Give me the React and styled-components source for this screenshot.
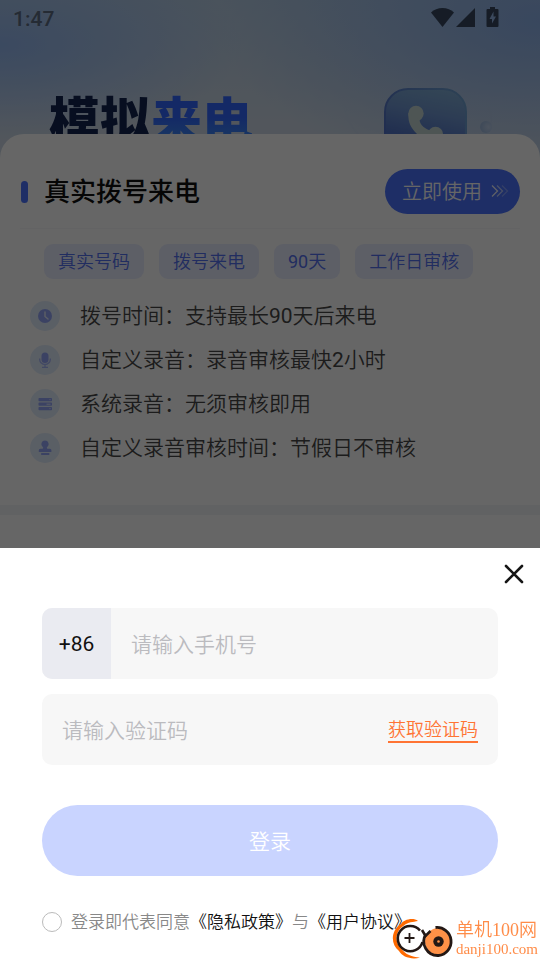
import React, { useState } from "react"
import styled, { createGlobalStyle } from "styled-components"

const tags = ["真实号码", "拨号来电", "90天", "工作日审核"]

const features = [
  { icon: "clock", text: "拨号时间：支持最长90天后来电" },
  { icon: "mic", text: "自定义录音：录音审核最快2小时" },
  { icon: "server", text: "系统录音：无须审核即用" },
  { icon: "stamp", text: "自定义录音审核时间：节假日不审核" },
]

// digits get the regular weight, the Chinese text around them stays lighter
const withDigits = (text) =>
  text.split(/(\d+)/).map((part, i) => (i % 2 ? <Digits key={i}>{part}</Digits> : part))

const featureIcons = {
  clock: (
    <>
      <circle cx="15" cy="15" r="7" fill="#94a6f8" />
      <path d="M15 11v4.5l3 2.5" stroke="#e4ecfc" strokeWidth="1.4" fill="none" strokeLinecap="round" />
    </>
  ),
  mic: (
    <>
      <rect x="11.500" y="7.500" width="7" height="10.500" rx="3.500" fill="#94a6f8" />
      <path d="M9.700 13.500v1a5.300 5 0 0 0 10.600 0v-1M15 20v2M12 22.400h6" stroke="#a6b6fa" strokeWidth="1.3" fill="none" />
    </>
  ),
  server: (
    <>
      <rect x="8.500" y="9" width="13.500" height="3.200" rx="0.800" fill="#94a6f8" />
      <rect x="8.500" y="13.600" width="13.500" height="3.200" rx="0.800" fill="#94a6f8" />
      <rect x="8.500" y="18" width="13.500" height="3.200" rx="0.800" fill="#94a6f8" />
      <path d="M19.500 10.600h1M16.500 15.200h4M19.500 19.600h1" stroke="#dfe7ff" strokeWidth="1" />
    </>
  ),
  stamp: (
    <>
      <path
        d="M15 7.500a3.700 3.700 0 0 1 2.300 6.600c-.8.600-.6 1.600.4 1.700h2.300a1.500 1.500 0 0 1 1.400 1.500v1.700H8.800v-1.700a1.500 1.500 0 0 1 1.400-1.500h2.100c1-.1 1.200-1.100.4-1.700A3.700 3.700 0 0 1 15 7.500z"
        fill="#94a6f8"
      />
      <rect x="11" y="20" width="8.500" height="2" rx="0.800" fill="#94a6f8" />
    </>
  ),
}

const StatusIcons = () => (
  <svg width="68" height="26" viewBox="0 0 68 26" fill="#374860" aria-hidden="true">
    <path d="M0 6.500C3 3.500 7 2 11.500 2S20 3.500 23 6.500L11.500 21z" />
    <path d="M44 2v19H25z" />
    <path
      fillRule="evenodd"
      d="M59 1h5v2h2.500a1 1 0 0 1 1 1v16a1 1 0 0 1-1 1h-10a1 1 0 0 1-1-1V4a1 1 0 0 1 1-1H59zM62.500 5.500L58.500 13h2.500v4.500l4-7h-2.500z"
    />
  </svg>
)

const PhoneTile = () => (
  <svg width="154" height="84" viewBox="0 0 154 84" aria-hidden="true">
    <defs>
      <linearGradient id="tile" x1="0.7" y1="0" x2="0.5" y2="1">
        <stop offset="0" stopColor="#80aed6" />
        <stop offset="0.3" stopColor="#7198d2" />
        <stop offset="0.6" stopColor="#5578c8" />
        <stop offset="1" stopColor="#4468d8" />
      </linearGradient>
      <linearGradient id="rim" x1="0" y1="0.5" x2="1" y2="0">
        <stop offset="0" stopColor="#5272c8" />
        <stop offset="1" stopColor="#72a6d4" />
      </linearGradient>
      <radialGradient id="orb" cx="0.7" cy="0.5" r="0.6">
        <stop offset="0" stopColor="#c0d2ec" />
        <stop offset="1" stopColor="#9ab6dc" />
      </radialGradient>
    </defs>
    <path d="M7 14c0 13 5 24 14 33" stroke="#c0d0e6" strokeWidth="1.500" fill="none" opacity="0.300" />
    <path d="M150 20c4 6 5 12 2 18" stroke="#b4c8e4" strokeWidth="1.500" fill="none" opacity="0.300" />
    <circle cx="148" cy="39" r="6" fill="url(#orb)" opacity="0.800" />
    <rect x="47" y="1" width="81" height="82" rx="23" fill="url(#tile)" stroke="url(#rim)" strokeWidth="2" />
    <g fill="#c2d4d2">
      <circle cx="78" cy="25.500" r="7.700" />
      <circle cx="97.500" cy="46.500" r="7.700" />
      <path d="M70.300 25C70 35 73 40 79 46l9 8h10V41l-4 2c-7-2-12-6-12.500-11z" />
    </g>
  </svg>
)

const Arrows = () => (
  <svg width="18" height="14" viewBox="0 0 18 14" fill="none" stroke="#fff" strokeWidth="1.300" aria-hidden="true">
    <path d="M1 1.500L6.500 7 1 12.500" opacity="0.900" />
    <path d="M6 1.500L11.500 7 6 12.500" opacity="0.600" />
    <path d="M11 1.500L16.500 7 11 12.500" opacity="0.300" />
  </svg>
)

const BrandLogo = () => (
  <svg width="66" height="42" viewBox="0 0 66 42" fill="none" aria-hidden="true">
    <circle cx="21" cy="20" r="16" fill="#fff" />
    <path
      d="M29 3C24-1 14 2 12 6C2 12 1 26 10 33c3 6 13 9 21 6.500C23 39 16 36 13 31.500C5 25 6 13 15 7.500C19 4 24 4 29 3z"
      fill="#ff6a00"
    />
    <path d="M31 12.500A12.600 12.600 0 1 0 33.500 24" stroke="#231815" strokeWidth="2.600" />
    <path d="M20.500 15v10M15.500 20h10" stroke="#231815" strokeWidth="1.800" />
    <circle cx="49.500" cy="23.500" r="13.500" fill="#ff9147" />
    <path d="M46.500 9.500A14 14 0 0 1 49.500 37.500A14 14 0 0 1 37 16" stroke="#231815" strokeWidth="2.800" />
    <path d="M33 12l3.500 6 5-5" stroke="#231815" strokeWidth="2.600" />
    <circle cx="49.500" cy="23.500" r="5.200" fill="#231815" />
    <circle cx="49.500" cy="23.500" r="1.300" fill="#ff9147" />
  </svg>
)

const App = () => {
  const [phone, setPhone] = useState("")
  const [code, setCode] = useState("")
  const [agreed, setAgreed] = useState(false)

  return (
    <>
      <GlobalStyle />
      <Page>
        <Hero>
          <StatusBar>
            <span>1:47</span>
            <StatusIcons />
          </StatusBar>
          <Banner>
            <BannerTitle>
              模拟<em>来电</em>
            </BannerTitle>
            <PhoneTile />
          </Banner>
        </Hero>
        <Card>
          <CardHeader>
            <CardTitle>真实拨号来电</CardTitle>
            <UseButton type="button">
              立即使用
              <Arrows />
            </UseButton>
          </CardHeader>
          <TagList>
            {tags.map((tag) => (
              <Tag key={tag}>{withDigits(tag)}</Tag>
            ))}
          </TagList>
          <FeatureList>
            {features.map(({ icon, text }) => (
              <Feature key={icon}>
                <FeatureIcon viewBox="0 0 30 30" aria-hidden="true">
                  {featureIcons[icon]}
                </FeatureIcon>
                <span>{withDigits(text)}</span>
              </Feature>
            ))}
          </FeatureList>
        </Card>
        <Divider />
      </Page>
      <Overlay>
        <Sheet role="dialog" aria-modal="true" aria-label="登录">
          <CloseButton type="button" aria-label="关闭">
            <svg width="20" height="20" viewBox="0 0 20 20" stroke="#161616" strokeWidth="2.600" strokeLinecap="round">
              <path d="M2 2l16 16M18 2L2 18" />
            </svg>
          </CloseButton>
          <Form onSubmit={(e) => e.preventDefault()}>
            <Field>
              <Prefix>+86</Prefix>
              <Input
                type="tel"
                aria-label="手机号"
                placeholder="请输入手机号"
                value={phone}
                onChange={(e) => setPhone(e.target.value)}
              />
            </Field>
            <Field>
              <Input
                type="text"
                aria-label="验证码"
                placeholder="请输入验证码"
                value={code}
                onChange={(e) => setCode(e.target.value)}
              />
              <CodeButton type="button">获取验证码</CodeButton>
            </Field>
            <SubmitButton type="submit">登录</SubmitButton>
            <Agreement>
              <Radio
                id="agree"
                type="checkbox"
                checked={agreed}
                onChange={(e) => setAgreed(e.target.checked)}
              />
              <label htmlFor="agree">
                登录即代表同意<a href="#privacy">《隐私政策》</a>与<a href="#terms">《用户协议》</a>
              </label>
            </Agreement>
          </Form>
        </Sheet>
      </Overlay>
      <Brand>
        <BrandLogo />
        <BrandText>
          <BrandName>单机100网</BrandName>
          <BrandUrl>danji100.com</BrandUrl>
        </BrandText>
      </Brand>
    </>
  )
}

export default App

const GlobalStyle = createGlobalStyle`
  * {
    box-sizing: border-box;
  }
  body {
    margin: 0;
    background: #fff;
    font-family: Roboto, "Noto Sans CJK SC", sans-serif;
    font-weight: 350;
  }
  button, input {
    font-family: inherit;
    font-weight: inherit;
  }
  svg {
    display: block;
    flex-shrink: 0;
  }
`
const Digits = styled.span`
  font-weight: 400;
`
const Page = styled.main`
  min-height: 100vh;
  background: #fff;
`
const Hero = styled.header`
  background: radial-gradient(ellipse 45% 55% at 0% 26%, #94b8f0, rgba(148, 184, 240, 0) 100%),
    radial-gradient(ellipse 60% 90% at 100% 12%, #8eb2ea, rgba(142, 178, 234, 0) 100%),
    linear-gradient(180deg, #b8cfe6, #ccd8e6 70%);
`
const StatusBar = styled.div`
  display: flex;
  justify-content: space-between;
  align-items: center;
  height: 38px;
  padding: 0 41px 0 13px;
  color: #5c6c82;
  font-size: 21px;
  font-weight: 500;
`
const Banner = styled.div`
  display: flex;
  justify-content: space-between;
  align-items: flex-start;
  padding: 50px 48px 0 49px;
`
const BannerTitle = styled.h1`
  margin: 0;
  color: #122350;
  font-size: 51px;
  font-weight: 900;
  line-height: 70px;

  em {
    color: transparent;
    background: linear-gradient(180deg, #3266ff 40%, #46a0f0);
    background-clip: text;
    font-style: normal;
  }
`
const Card = styled.section`
  position: relative;
  margin-top: -38px;
  padding: 35px 20px 42px;
  border-radius: 24px 24px 0 0;
  background: #fff;
`
const CardHeader = styled.div`
  display: flex;
  justify-content: space-between;
  align-items: center;
  padding-bottom: 14px;
  border-bottom: 1px solid #f8f8fa;
`
const CardTitle = styled.h2`
  display: flex;
  align-items: center;
  gap: 16px;
  margin: 0;
  color: #111;
  font-size: 26px;
  font-weight: 500;
  line-height: 36px;

  &::before {
    content: "";
    width: 7px;
    height: 22px;
    margin-left: 1px;
    border-radius: 4px;
    background: #4b73ff;
  }
`
const UseButton = styled.button`
  display: flex;
  align-items: center;
  gap: 9px;
  height: 45px;
  padding: 0 11px 2px 17px;
  border: 0;
  border-radius: 23px;
  background: #4b73ff;
  color: #fff;
  font-size: 20px;
`
const TagList = styled.div`
  display: flex;
  gap: 15px;
  padding: 15px 24px 0;
`
const Tag = styled.span`
  padding: 0 14px;
  border-radius: 9px;
  background: #e9edff;
  color: #5470f0;
  font-size: 18px;
  line-height: 35px;
`
const FeatureList = styled.ul`
  display: flex;
  flex-direction: column;
  gap: 14px;
  margin: 0;
  padding: 22px 10px 0;
  list-style: none;
`
const Feature = styled.li`
  display: flex;
  align-items: center;
  gap: 20px;
  color: #484848;
  font-size: 21px;
  line-height: 30px;
`
const FeatureIcon = styled.svg`
  width: 30px;
  height: 30px;
  border-radius: 50%;
  background: #e2edfc;
`
const Divider = styled.div`
  height: 10px;
  background: #f2f4f8;
`
const Overlay = styled.div`
  position: fixed;
  inset: 0;
  display: flex;
  flex-direction: column;
  justify-content: flex-end;
  background: rgba(0, 0, 0, 0.6);
`
const Sheet = styled.section`
  display: flex;
  flex-direction: column;
  padding: 16px 16px 25px;
  background: #fff;
`
const CloseButton = styled.button`
  align-self: flex-end;
  padding: 0;
  border: 0;
  background: none;
`
const Form = styled.form`
  display: flex;
  flex-direction: column;
  gap: 15px;
  padding: 24px 26px 0;
`
const Field = styled.div`
  display: flex;
  align-items: center;
  height: 71px;
  border-radius: 10px;
  overflow: hidden;
  background: #f7f7f7;
`
const Prefix = styled.span`
  width: 69px;
  padding-top: 2px;
  background: #eaebf1;
  color: #111;
  font-size: 21px;
  font-weight: 400;
  line-height: 71px;
  text-align: center;
`
const Input = styled.input`
  flex: 1;
  min-width: 0;
  height: 100%;
  padding: 2px 20px 0;
  border: 0;
  outline: 0;
  background: none;
  color: #111;
  font-size: 21px;

  &::placeholder {
    color: #bbbbbf;
  }
`
const CodeButton = styled.button`
  margin-right: 20px;
  padding: 2px 0 0;
  border: 0;
  border-bottom: 2px solid #ff7434;
  background: none;
  color: #ff7434;
  font-size: 18px;
  line-height: 22px;
`
const SubmitButton = styled.button`
  height: 71px;
  margin-top: 25px;
  padding: 0 0 2px;
  border: 0;
  border-radius: 36px;
  background: #c9d4ff;
  color: #fff;
  font-size: 21px;
`
const Agreement = styled.div`
  display: flex;
  align-items: center;
  gap: 9px;
  margin-top: 18px;
  color: #888;
  font-size: 17px;
  line-height: 26px;
  white-space: nowrap;

  a {
    color: #111;
    text-decoration: none;
  }
`
const Radio = styled.input`
  appearance: none;
  width: 20px;
  height: 20px;
  margin: 0;
  border: 1px solid #bbb;
  border-radius: 50%;

  &:checked {
    border-color: #4b73ff;
    background: #4b73ff;
  }
`
const Brand = styled.aside`
  position: fixed;
  right: 2px;
  bottom: 0;
  display: flex;
  align-items: flex-end;
  gap: 1px;
`
const BrandText = styled.div`
  display: flex;
  flex-direction: column;
  color: #ff8c48;
  font-family: "Liberation Serif", "Noto Sans CJK SC", serif;
`
const BrandName = styled.strong`
  font-size: 18px;
  font-weight: 350;
  line-height: 16px;
`
const BrandUrl = styled.span`
  font-size: 15px;
  line-height: 22px;
`
